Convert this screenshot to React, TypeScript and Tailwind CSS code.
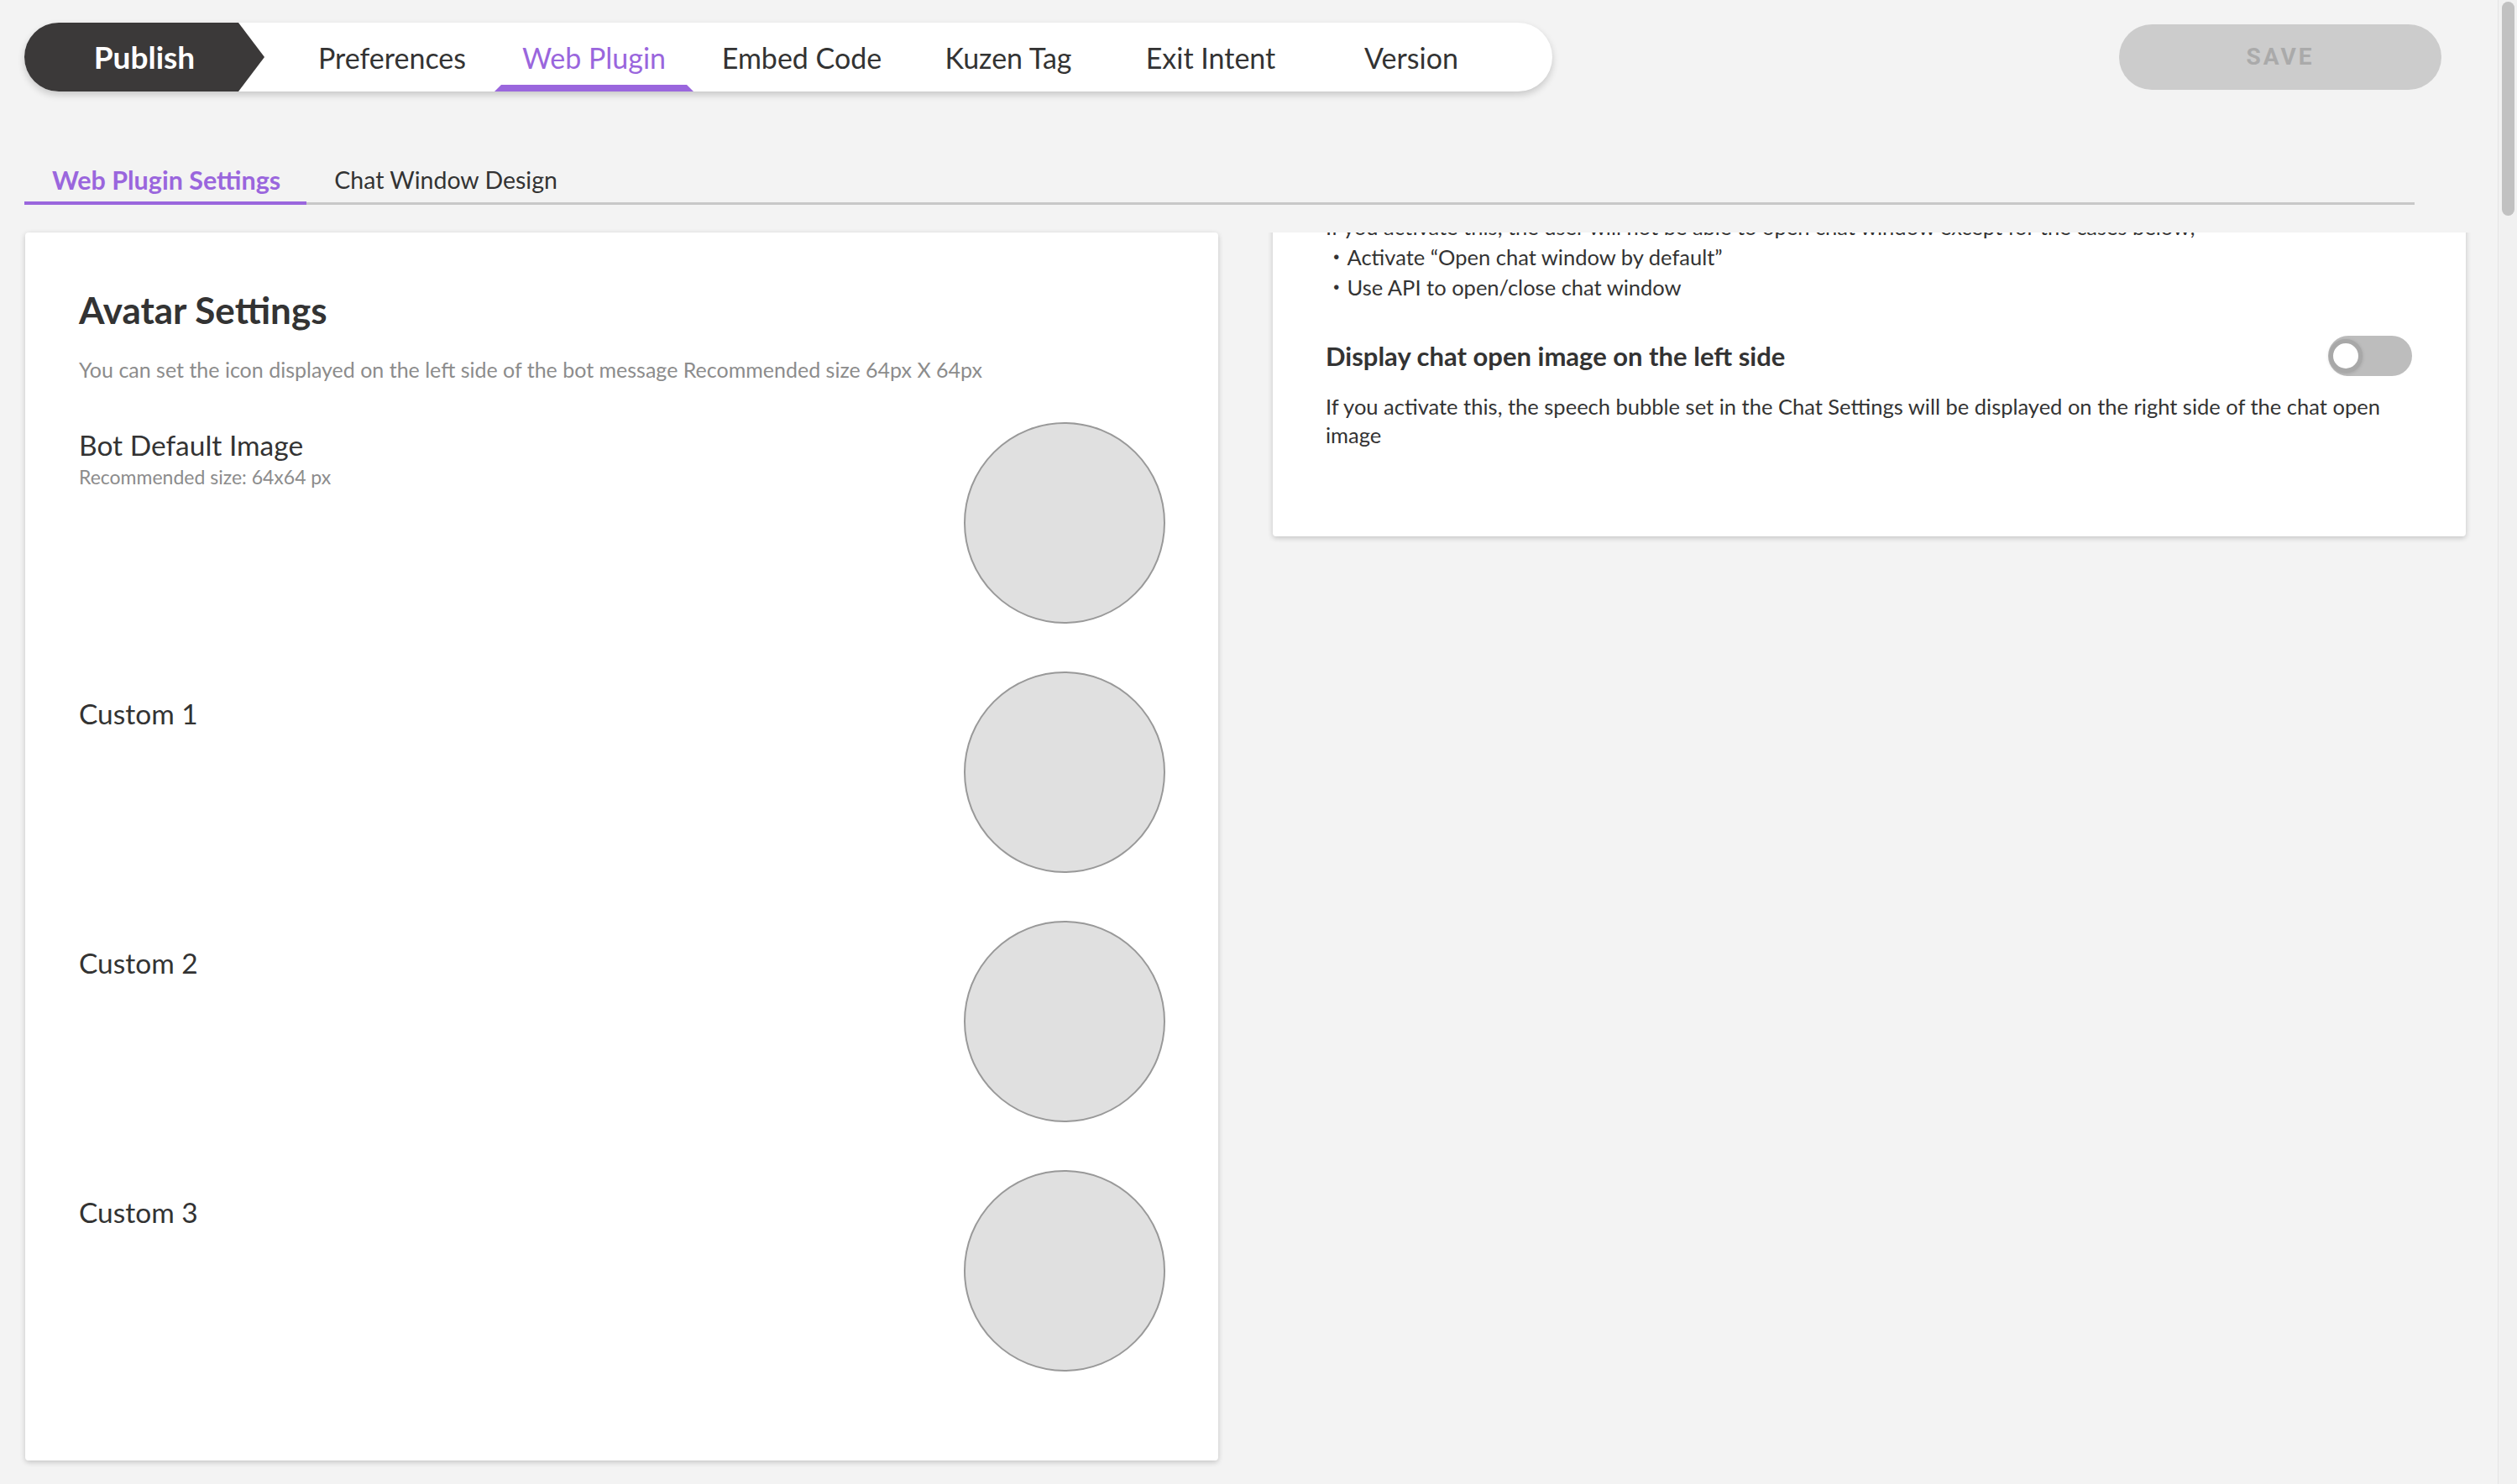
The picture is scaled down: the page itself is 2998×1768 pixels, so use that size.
import React from "react";

const tabs = [
  { label: "Preferences", w: "w-[244px]" },
  { label: "Web Plugin", w: "w-[237px]", active: true },
  { label: "Embed Code", w: "w-[258px]" },
  { label: "Kuzen Tag", w: "w-[234px]" },
  { label: "Exit Intent", w: "w-[248px]" },
  { label: "Version", w: "w-[230px]" },
];

const avatars = [
  { label: "Bot Default Image", note: "Recommended size: 64x64 px" },
  { label: "Custom 1" },
  { label: "Custom 2" },
  { label: "Custom 3" },
];

const NavBar: React.FC = () => {
  return (
    <div className="flex h-[82px] w-[1820px] items-stretch rounded-full bg-white shadow-[0_4px_8px_rgba(0,0,0,0.18)]">
      {/* Publish arrow */}
      <div className="flex w-[286px] items-center justify-center rounded-l-full bg-[#3b3939] [clip-path:polygon(0_0,calc(100%_-_31px)_0,100%_50%,calc(100%_-_31px)_100%,0_100%)]">
        <span className="text-[37px] font-bold text-white">Publish</span>
      </div>
      <div className="ml-[30px] flex">
        {tabs.map((t) => (
          <div key={t.label} className={`relative flex items-center justify-center ${t.w}`}>
            <span className={`text-[34px] ${t.active ? "text-[#9a66dd]" : "text-[#333333]"}`}>{t.label}</span>
            {t.active && (
              <div className="absolute bottom-0 left-0 right-0 h-[8px] bg-[#9a66dd] [clip-path:polygon(8px_0,calc(100%_-_8px)_0,100%_100%,0_100%)]" />
            )}
          </div>
        ))}
      </div>
    </div>
  );
};

const AvatarCard: React.FC = () => {
  return (
    <div className="h-[1463px] rounded-[4px] bg-white pl-[64px] pr-[63px] pt-[66px] shadow-[0_2px_6px_rgba(0,0,0,0.2)]">
      <h2 className="text-[44px] font-bold leading-[52px] text-[#333333]">Avatar Settings</h2>
      <p className="mt-[27px] text-[25px] leading-[36px] text-[#8c8c8c]">
        You can set the icon displayed on the left side of the bot message Recommended size 64px X 64px
      </p>
      <div className="mt-[45px] flex flex-col gap-[57px]">
        {avatars.map((a, i) => (
          <div key={a.label} className="flex items-start justify-between">
            <div className={i === 0 ? "pt-[6px]" : "pt-[29px]"}>
              <div className="text-[33.5px] leading-[42px] text-[#333333]">{a.label}</div>
              {a.note && <div className="mt-[3px] text-[23px] leading-[28px] text-[#8c8c8c]">{a.note}</div>}
            </div>
            <div className="h-[240px] w-[240px] rounded-full border-2 border-[#999999] bg-[#e0e0e0]" />
          </div>
        ))}
      </div>
    </div>
  );
};

const PluginCard: React.FC = () => {
  return (
    <div className="-mx-[12px] -mb-[20px] self-start overflow-hidden px-[12px] pb-[20px]">
      <div className="-mt-[60px] rounded-[4px] bg-white pb-[104px] pl-[63px] pr-[64px] pt-[35px] text-[#333333] shadow-[0_2px_6px_rgba(0,0,0,0.2)]">
        <div className="text-[25.5px] leading-[36px]">
          <p>If you activate this, the user will not be able to open chat window except for the cases below;</p>
          <p>・Activate “Open chat window by default”</p>
          <p>・Use API to open/close chat window</p>
        </div>
        <div className="mt-[40px] flex h-[48px] items-center justify-between">
          <span className="text-[31px] font-bold">Display chat open image on the left side</span>
          {/* toggle (off) */}
          <div className="flex h-[48px] w-[100px] items-center rounded-full bg-[#bdbdbd] pl-[1px]">
            <div className="h-[40px] w-[40px] rounded-full border-[5px] border-[#a8a8a8] bg-white shadow-[0_1px_4px_rgba(0,0,0,0.15)]" />
          </div>
        </div>
        <p className="mt-[19px] max-w-[1270px] text-[25.5px] leading-[34px]">
          If you activate this, the speech bubble set in the Chat Settings will be displayed on the right side of the chat open image
        </p>
      </div>
    </div>
  );
};

export default function App() {
  return (
    <div className="flex h-[1768px] w-full overflow-hidden bg-[#f3f3f3] font-['Lato','Noto_Sans_CJK_JP',sans-serif]">
      <div className="min-w-0 flex-1">
        {/* top bar */}
        <div className="flex items-start justify-between pl-[29px] pr-[67px] pt-[27px]">
          <NavBar />
          <button
            type="button"
            className="mt-[2px] h-[78px] w-[384px] rounded-full bg-[#cccccc] font-['Roboto',sans-serif] text-[28px] font-bold tracking-[3px] text-[#aaaaaa]"
          >
            SAVE
          </button>
        </div>

        {/* sub tabs */}
        <div className="ml-[29px] mt-[76px] flex h-[59px] w-[2847px] border-b-[3px] border-[#c8c8c8]">
          <div className="-mb-[3px] border-b-[4px] border-[#9a66dd] pb-[6px] pl-[33px] pr-[31px] pt-[9px] text-[30.5px] font-bold leading-[40px] text-[#9a66dd]">
            Web Plugin Settings
          </div>
          <div className="-mb-[3px] border-b-[4px] border-transparent px-[33px] pb-[6px] pt-[9px] text-[28.5px] leading-[40px] text-[#333333]">
            Chat Window Design
          </div>
        </div>

        {/* content */}
        <div className="ml-[30px] mt-[33px] grid grid-cols-[1421px_1421px] items-start gap-[65px]">
          <AvatarCard />
          <PluginCard />
        </div>
      </div>

      {/* scrollbar */}
      <div className="w-[23px] shrink-0 border-l border-[#e4e4e4] bg-[#f1f1f1] pt-[2px]">
        <div className="mx-auto h-[255px] w-[15px] rounded-full bg-[#c1c1c1]" />
      </div>
    </div>
  );
}
